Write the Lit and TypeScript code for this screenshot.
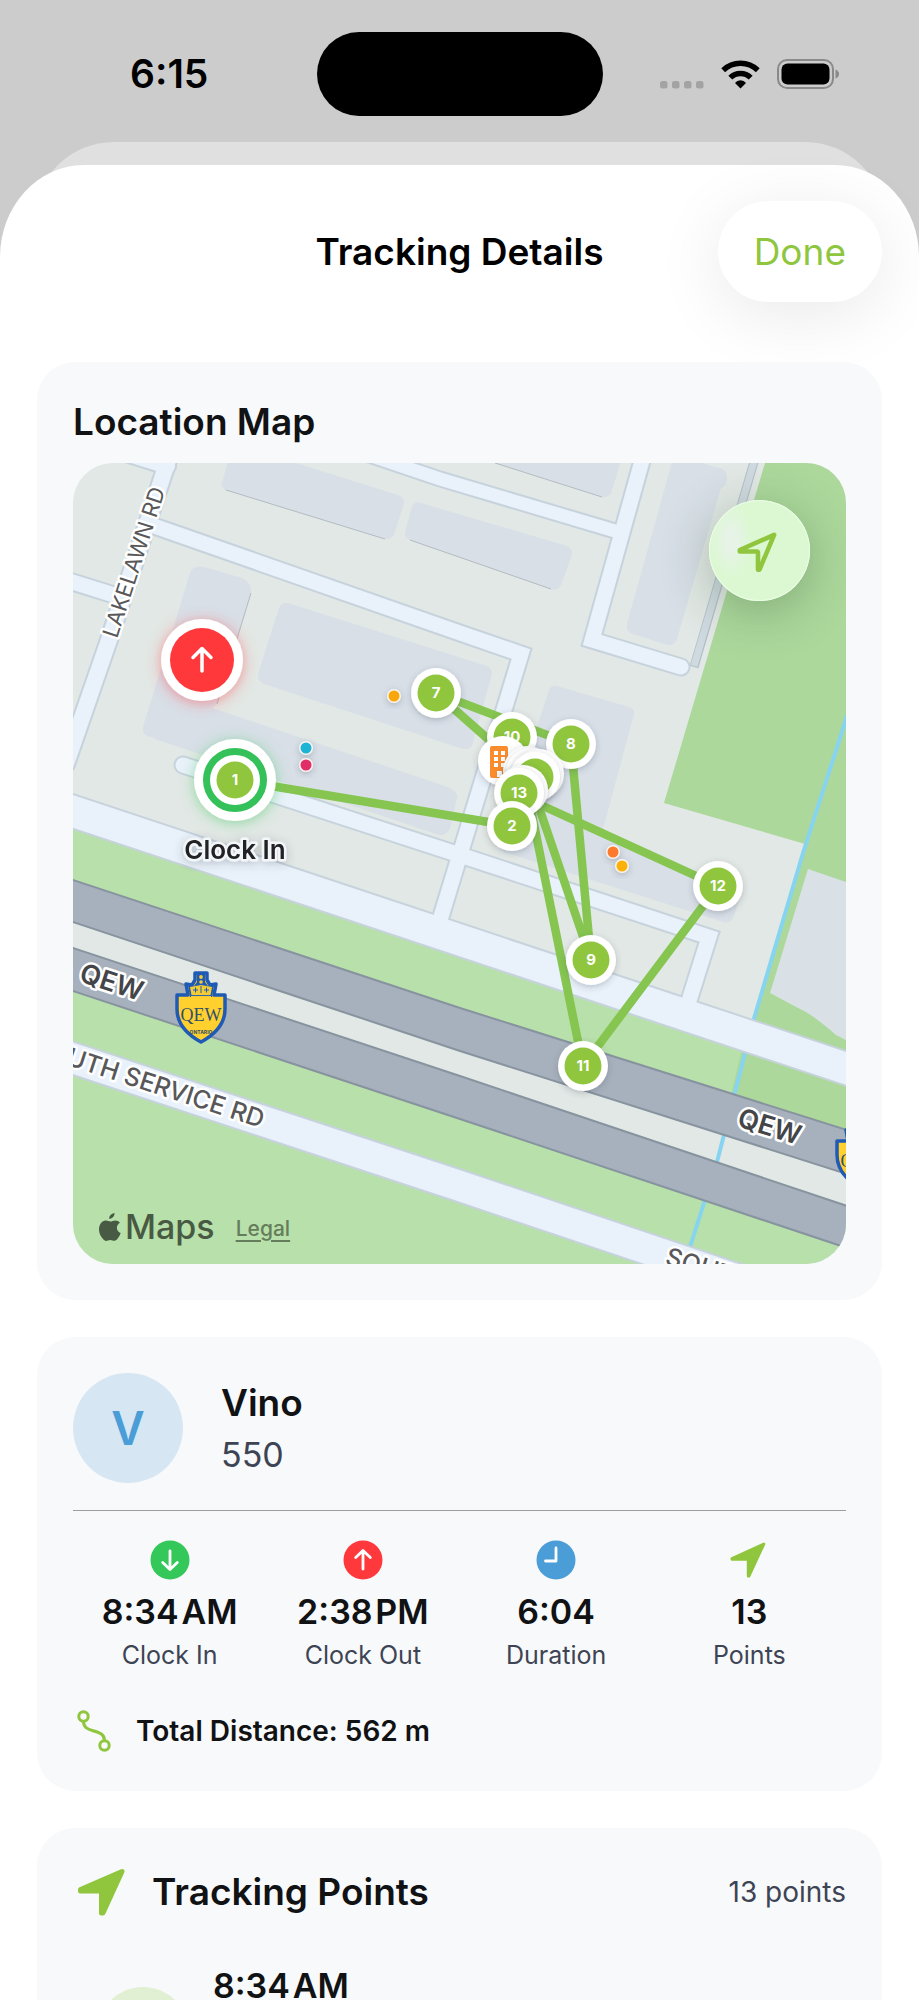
import { LitElement, html, svg, css } from "lit";
import { customElement } from "lit/decorators.js";

interface Pin {
  x: number;
  y: number;
  label: string;
}

interface Stat {
  icon: "in" | "out" | "clock" | "points";
  value: string;
  label: string;
}

/* Roads, drawn first as a wide casing and then as a narrower surface. */
const ROADS: { d: string; w: number }[] = [
  { d: "M60 432L167 466", w: 18 },
  { d: "M174 442L110 637L66 764", w: 18 },
  { d: "M50 575L114 595", w: 17 },
  { d: "M154 526L460 633L521 654L440 920", w: 17 },
  { d: "M183 765L463 856L709 937L688 1004", w: 17 },
  { d: "M360 452L440 479L615 531", w: 15 },
  { d: "M645 450L592 640L681 667", w: 17 },
  { d: "M60 807L860 1073", w: 33 },
];

const SERVICE_ROAD = "M60 1054L460 1186L760 1287";

const BUILDINGS = [
  "M230 455L222 483Q221 488 226 490L385 539Q391 540 394 535L404 503Q404 497 398 495L270 455Z",
  "M421 503Q415 501 412 506L405 532Q404 537 410 540L551 589Q558 591 561 585L572 555Q573 549 567 546Z",
  "M470 455L602 497Q608 498 611 493L623 455Z",
  "M674 455L627 624Q626 632 633 634L668 645Q675 645 677 639L721 488Q727 486 727 477Q727 471 722 469Z",
  "M196 567Q200 566 204 567L242 578Q252 583 251 593L217 704L212 708L445 786Q459 791 457 798L450 828Q447 836 439 835L155 739Q151 736 149 737Q142 734 143 727L190 573Q192 568 196 567Z",
  "M288 603Q282 602 279 608L258 674Q257 681 264 684L460 748Q469 751 472 745L492 674Q492 668 487 666Z",
  "M557 686Q551 685 549 690L499 843Q498 849 504 852L723 922Q730 924 733 918L742 892L603 829L634 714Q635 709 629 707Z",
];

const ROUTE: string[] = [
  "M235 780L512 826L526 790",
  "M532 778L436 693L571 744L591 960L529 778",
  "M526 785L583 1066L718 886L519 795",
];

const PINS: Pin[] = [
  { x: 436, y: 693, label: "7" },
  { x: 571, y: 744, label: "8" },
  { x: 591, y: 960, label: "9" },
  { x: 583, y: 1066, label: "11" },
  { x: 718, y: 886, label: "12" },
];

const POIS = [
  { x: 394, y: 696, c: "#f8a80a" },
  { x: 306, y: 748, c: "#1fb4d6" },
  { x: 306, y: 765, c: "#df2f66" },
  { x: 613, y: 852, c: "#fb7a2c" },
  { x: 622, y: 866, c: "#fbb00a" },
];

const STATS: Stat[] = [
  { icon: "in", value: "8:34\u200aAM", label: "Clock In" },
  { icon: "out", value: "2:38\u200aPM", label: "Clock Out" },
  { icon: "clock", value: "6:04", label: "Duration" },
  { icon: "points", value: "13", label: "Points" },
];

const pin = (p: Pin) => svg`
  <g filter="url(#soft)"><circle cx=${p.x} cy=${p.y} r="25" fill="#fff" /></g>
  <circle cx=${p.x} cy=${p.y} r="18.5" fill="#8fc63d" />
  <text class="pin-text" x=${p.x} y=${p.y + 5}>${p.label}</text>`;

const shield = (dx: number, dy: number) => svg`
  <g transform="translate(${dx} ${dy})">
    <path d="M195 973h12v7l3 5 6-1-2 11h11v14q0 20-24 33q-24-13-24-33v-14h11l-2-11 6 1 3-5z"
      fill="#ffd02e" stroke="#1f5bb5" stroke-width="3.5" stroke-linejoin="round" />
    <path d="M188 985l6 1 3-4v-8h8v8l3 4 6-1-2 12h-22z" fill="#1f5bb5" />
    <path d="M190 987l11-2 11 2-1.500 8h-19z" fill="#f3cb35" />
    <path d="M191 996.500h20" stroke="#f3cb35" stroke-width="1.200" />
    <circle cx="201" cy="977" r="1.900" fill="#f3cb35" /><circle cx="201" cy="982" r="1.800" fill="#f3cb35" />
    <path d="M193 990h5M195.500 987.500v5M204 990h5M206.500 987.500v5M201 986v7" stroke="#1f5bb5" />
    <text class="shield-text" x="201" y="1021">QEW</text>
    <text class="shield-small" x="201" y="1034">ONTARIO</text>
  </g>`;

@customElement("location-map")
export class LocationMap extends LitElement {
  static styles = css`
    :host { display: block; position: relative; overflow: hidden; border-radius: 40px; }
    .canvas { display: block; width: 100%; height: auto; }
    text { font-family: Inter, "Liberation Sans", sans-serif; }
    .pin-text { font-size: 15px; font-weight: 700; fill: #fff; text-anchor: middle; }
    .road { font-size: 22px; fill: #58585a; }
    .service { font-size: 25px; font-weight: 500; fill: #58585a; }
    .highway { font-size: 27px; font-weight: 600; fill: #434548; }
    .road, .service, .highway, .caption {
      stroke: #fff; stroke-width: 5px; stroke-linejoin: round; paint-order: stroke;
    }
    .caption { font-size: 26px; font-weight: 600; fill: #222426; text-anchor: middle; stroke: #f3f6f8; }
    .shield-text { font-family: "Liberation Serif", serif; font-size: 18px; fill: #31506b; text-anchor: middle; }
    .shield-small { font-size: 5px; font-weight: 700; fill: #31506b; text-anchor: middle; }
    .locate {
      position: absolute; top: 37px; right: 36px; width: 101px; height: 101px; padding: 0;
      border: 0; border-radius: 50%;
      background: radial-gradient(ellipse 20px 36px at 22% 40%, #e6f3e6 30%, #dcf8d3 100%);
      box-shadow: 0 10px 50px rgba(40, 70, 40, 0.32), inset 0 0 0 1px #eafce5;
    }
    .locate svg { display: block; width: 100%; height: 100%; }
    .credits {
      position: absolute; left: 25px; bottom: 15px; display: flex; align-items: center; gap: 21px;
      color: #485a44;
    }
    .brand { display: flex; align-items: center; gap: 3px; font: 500 34px/44px Inter, sans-serif; }
    .brand svg { width: 24px; height: 30px; }
    .legal { font: 500 21px/32px Inter, sans-serif; color: #647d5b; text-underline-offset: 4px; padding-top: 4px; }
  `;

  render() {
    return html`
      <svg class="canvas" viewBox="73 463 773 801" role="img" aria-label="Map of tracked locations">
        <defs>
          <filter id="soft" x="-40%" y="-40%" width="180%" height="180%">
            <feDropShadow dx="0" dy="2" stdDeviation="3" flood-color="#3b4450" flood-opacity="0.28" />
          </filter>
          <filter id="halo" x="-30%" y="-80%" width="160%" height="260%">
            <feDropShadow dx="0" dy="2" stdDeviation="5" flood-color="#3b4450" flood-opacity="0.28" />
          </filter>
          <filter id="glow-red" x="-50%" y="-50%" width="200%" height="200%">
            <feDropShadow dx="0" dy="2" stdDeviation="7" flood-color="#ff3b3f" flood-opacity="0.5" />
          </filter>
          <filter id="glow-green" x="-50%" y="-50%" width="200%" height="200%">
            <feDropShadow dx="0" dy="2" stdDeviation="7" flood-color="#34c759" flood-opacity="0.5" />
          </filter>
        </defs>
        <rect x="73" y="463" width="773" height="801" fill="#e2e8e5" />
        <path d="M765 463H846V1070L750 1030L805 844L664 803Z" fill="#acd89c" />
        <path d="M808 869L846 882V1040L836 1035Q812 1014 800 1009L770 993Z" fill="#d9e1e6" />
        <path d="M73 811L846 1069V1264H73Z" fill="#b8e0aa" />
        <path d="M744 1040L846 1069V1180L725 1120Z" fill="#acd89c" />
        <path d="M73 900L460 1030L846 1150V1226L460 1098L73 968Z" fill="#e2e8e5" />
        <path d="M848 713L803 853L753 1022L717 1162L690 1247" fill="none" stroke="#86d4f0" stroke-width="4" />

        ${BUILDINGS.map((d) => svg`<path d=${d} fill="#d8dfe7" />`)}
        <path d="M226 490L385 539M410 540L551 589M495 463L602 497M251 593L217 704" fill="none" stroke="#b3bbc2" stroke-width="1" />

        <path d="M756 455L694 667" fill="none" stroke="#b2bec6" stroke-width="9" />
        <path d="M756 455L694 666" fill="none" stroke="#cfdae0" stroke-width="7" />
        ${ROADS.map((r) => svg`<path d=${r.d} fill="none" stroke="#c6d2dc" stroke-width=${r.w + 2} stroke-linecap="round" />`)}
        <path d=${SERVICE_ROAD} fill="none" stroke="#c6d2dc" stroke-width="34" />
        ${ROADS.map((r) => svg`<path d=${r.d} fill="none" stroke="#e9f1fa" stroke-width=${r.w - 2} stroke-linecap="round" />`)}
        <path d=${SERVICE_ROAD} fill="none" stroke="#e9f1fa" stroke-width="30" />
        <g fill="#a7b1bd" stroke="#87939f" stroke-width="2">
          <path d="M70 879L460 1008L850 1131V1175L460 1051L70 921Z" />
          <path d="M70 947L460 1076L850 1207V1249L460 1119L70 990Z" />
        </g>

        <text class="road" transform="translate(117 639) rotate(-72)">LAKELAWN RD</text>
        <text class="highway" transform="translate(78 981) rotate(18)">QEW</text>
        <text class="highway" transform="translate(736 1126) rotate(17)">QEW</text>
        <text class="service" text-anchor="end" transform="translate(261 1128) rotate(18)">SOUTH SERVICE RD</text>
        <text class="service" transform="translate(664 1264) rotate(17)">SOUTH SERVICE RD</text>
        ${shield(0, 0)} ${shield(660, 146)}

        ${POIS.map((p) => svg`
          <g filter="url(#soft)"><circle cx=${p.x} cy=${p.y} r="7" fill="#fbf4ee" /></g>
          <circle cx=${p.x} cy=${p.y} r="5.500" fill=${p.c} />`)}

        ${ROUTE.map((d) => svg`<path d=${d} fill="none" stroke="#86c550" stroke-width="8.500" stroke-linejoin="round" />`)}

        <g filter="url(#glow-red)"><circle cx="202" cy="660" r="41" fill="#fff" /></g>
        <circle cx="202" cy="660" r="32" fill="#ff383c" />
        <path d="M202 671V649M193 657.500L202 648.500L211 657.500" fill="none" stroke="#fff" stroke-width="3.500" stroke-linecap="round" stroke-linejoin="round" />

        <g filter="url(#glow-green)"><circle cx="235" cy="780" r="41" fill="#fff" /></g>
        <circle cx="235" cy="780" r="28.500" fill="none" stroke="#34c159" stroke-width="7" />
        <circle cx="235" cy="780" r="18.500" fill="#8fc63d" />
        <text class="pin-text" x="235" y="785">1</text>
        <g filter="url(#halo)"><text class="caption" x="235" y="859">Clock In</text></g>

        ${PINS.map(pin)}
        ${pin({ x: 512, y: 737, label: "10" })}
        <g filter="url(#soft)"><circle cx="503" cy="761" r="25" fill="#fff" /></g>
        <rect x="490" y="746" width="18" height="32" rx="2" fill="#fa8c2e" />
        <path d="M494 751h4v4h-4zM501 751h4v4h-4zM494 757h4v4h-4zM501 757h4v4h-4zM494 763h4v4h-4zM501 763h4v4h-4zM497 771h5v6h-5z" fill="#fff" />
        ${pin({ x: 528, y: 771, label: "" })}
        ${pin({ x: 531, y: 773, label: "" })}
        <g filter="url(#soft)"><circle cx="539" cy="774" r="25" fill="#fff" /></g>
        ${pin({ x: 535, y: 777, label: "" })}
        <g filter="url(#soft)"><circle cx="523" cy="790" r="25" fill="#fff" /></g>
        ${pin({ x: 519, y: 793, label: "13" })}
        ${pin({ x: 512, y: 826, label: "2" })}
      </svg>

      <button class="locate" aria-label="Center on route">
        <svg viewBox="0 0 100 100" fill="none" stroke="#8fc63d" stroke-width="4.500" stroke-linejoin="round">
          <path d="M64.500 34.500L30.500 49.500V51H47.800L48.500 51.700V69H50Z" />
        </svg>
      </button>
      <div class="credits">
        <span class="brand">
          <svg viewBox="0 0 24 30" fill="currentColor" aria-label="Apple">
            <path d="M16.500 1c.2 3-2.300 5.900-5.300 5.800C10.900 4 13.600 1.300 16.500 1zM21.900 10.700c-1.900 1.200-3 2.900-3 5 0 2.500 1.500 4.500 3.800 5.400-.6 1.900-1.600 3.600-2.800 5.200-1 1.400-2 2.500-3.500 2.500-1.600 0-2.200-.9-4.200-.9-1.900 0-2.600.9-4.200 1-1.600 0-2.700-1.300-3.800-2.800C1.100 22.200 0 16.500 2.100 12.500c1.200-2.500 3.500-4 5.900-4 1.800 0 3 1 4.500 1 1.400 0 2.600-1.100 4.900-1.100 1.800 0 3.400.8 4.500 2.300z" />
          </svg>Maps</span>
        <a class="legal" href="#legal">Legal</a>
      </div>
    `;
  }
}

@customElement("app-root")
export class AppRoot extends LitElement {
  static styles = css`
    :host {
      display: flex; flex-direction: column; height: 100vh; overflow: hidden;
      background: #cccccc; color: #111214;
      font-family: Inter, "Liberation Sans", sans-serif;
    }
    h1, h2, p, dl, dd, dt, ol { margin: 0; padding: 0; font: inherit; }
    svg { display: block; flex: none; }

    .status {
      display: grid; grid-template-columns: 1fr 286px 1fr; align-items: center;
      padding: 32px 0 49px; color: #000;
    }
    .time { padding-left: 130px; font-size: 39px; line-height: 48px; font-weight: 600; }
    .island { height: 84px; border-radius: 42px; background: #000; }
    .signals { display: flex; justify-content: flex-end; align-items: center; gap: 17px; padding-right: 80px; }

    .sheet {
      position: relative; flex: 1; min-height: 0; display: flex; flex-direction: column; gap: 60px;
      padding: 36px 37px 0; border-radius: 84px 84px 0 0 / 92px 92px 0 0; background: #fff;
    }
    .behind {
      position: absolute; z-index: -1; top: -23px; left: 34px; right: 34px; height: 120px;
      border-radius: 80px 80px 0 0; background: #e0e0e0;
    }
    .layer { position: relative; z-index: 0; flex: 1; min-height: 0; display: flex; flex-direction: column; }

    .bar { display: grid; grid-template-columns: 1fr auto 1fr; align-items: center; }
    .title { grid-column: 2; color: #000; }
    .title, .heading, .name { font-size: 37px; line-height: 48px; font-weight: 600; }
    .done {
      justify-self: end; padding: 0 36px; height: 101px; border: 0; border-radius: 51px; background: #fff;
      color: #8fc63f; font: 400 37px/48px Inter, sans-serif;
      box-shadow: 0 12px 70px rgba(0, 0, 0, 0.09);
    }

    .cards {
      display: flex; flex-direction: column; gap: 37px; min-height: 0;
      overflow-y: auto; scrollbar-width: none;
    }
    .card { flex: none; padding: 36px; border-radius: 38px; background: #f8f9fb; }
    .map-card { display: flex; flex-direction: column; gap: 17px; }

    .person { display: flex; align-items: center; gap: 38px; padding-bottom: 27px; border-bottom: 1px solid #9b9ea3; }
    .avatar {
      display: grid; place-items: center; width: 110px; height: 110px; border-radius: 50%;
      background: #d6e6f3; color: #4a9dd6; font-size: 46px; line-height: 56px; font-weight: 600;
    }
    .who { display: flex; flex-direction: column; gap: 6px; }
    .number { font-size: 34px; line-height: 44px; color: #3d4454; }

    .stats { display: grid; grid-template-columns: repeat(4, 1fr); padding-top: 29px; }
    .stat { display: flex; flex-direction: column; align-items: center; }
    .value { font-size: 34px; line-height: 44px; font-weight: 600; padding: 10px 0 5px; white-space: nowrap; }
    .label { font-size: 25px; line-height: 32px; color: #3d4454; }
    .total { display: flex; align-items: center; gap: 21px; padding-top: 36px; font-size: 28px; line-height: 48px; font-weight: 600; }

    .points-head { display: flex; align-items: center; gap: 21px; height: 56px; }
    .count { margin-left: auto; font-size: 28px; line-height: 48px; color: #3d4454; }
    .points { display: flex; flex-direction: column; list-style: none; padding-top: 44px; }
    .point { display: flex; align-items: flex-start; gap: 24px; padding: 0 24px; }
    .badge { width: 92px; height: 92px; margin-top: 23px; border-radius: 50%; background: #e1efd2; }
    .when { font-size: 34px; line-height: 44px; font-weight: 600; }
  `;

  private arrow(size: number) {
    return html`<svg width=${size} height=${size} viewBox="0 0 40 40" fill="#8fc63d" stroke="#8fc63d" stroke-width="3" stroke-linejoin="round" aria-hidden="true">
      <path d="M34.800 4L3 18.700V19.300H19.300V36H19.900Z" />
    </svg>`;
  }

  private statIcon(kind: Stat["icon"]) {
    if (kind === "points") return this.arrow(40);
    const color = { in: "#34c759", out: "#ff383c", clock: "#4a9dd6" }[kind];
    const mark = {
      in: "M20 11V29M12.700 22.500L20 29.500L27.300 22.500",
      out: "M20 29V11M12.700 17.500L20 10.500L27.300 17.500",
      clock: "M20 8V21H9.500",
    }[kind];
    return html`<svg width="40" height="40" viewBox="0 0 40 40" fill="none" aria-hidden="true">
      <circle cx="20" cy="20" r="19.500" fill=${color} />
      <path d=${mark} stroke="#fff" stroke-width="2.800" stroke-linecap="round" stroke-linejoin="round" />
    </svg>`;
  }

  render() {
    return html`
      <div class="status">
        <span class="time">6:15</span>
        <span class="island"></span>
        <span class="signals">
          <svg width="44" height="30" viewBox="0 0 44 30" fill="#a3a3a3" aria-label="No signal">
            <rect y="22" width="7.500" height="7.500" rx="2.500" /><rect x="12" y="22" width="7.500" height="7.500" rx="2.500" />
            <rect x="24" y="22" width="7.500" height="7.500" rx="2.500" /><rect x="36" y="22" width="7.500" height="7.500" rx="2.500" />
          </svg>
          <svg width="39" height="30" viewBox="0 0 39 30" aria-label="Wi-Fi">
            <g fill="none" stroke="#000" stroke-width="5.500">
              <path d="M2.200 11.200A25 25 0 0 1 36.800 11.200" />
              <path d="M9.300 18.600A14.500 14.500 0 0 1 29.700 18.600" />
            </g>
            <path d="M19.500 29.500L14 24A7 7 0 0 1 25 24Z" />
          </svg>
          <svg width="62" height="30" viewBox="0 0 62 30" aria-label="Battery">
            <rect x="1" y="1" width="55" height="28" rx="9" fill="none" stroke="#8a8a8a" stroke-width="2" />
            <rect x="4.500" y="4.500" width="48" height="21" rx="6" />
            <path d="M58.500 10.500Q62 12 62 15T58.500 19.500Z" fill="#8a8a8a" />
          </svg>
        </span>
      </div>

      <div class="layer">
        <div class="behind"></div>
        <main class="sheet">
          <header class="bar">
            <h1 class="title">Tracking Details</h1>
            <button class="done">Done</button>
          </header>

          <div class="cards">
            <section class="card map-card">
              <h2 class="heading">Location Map</h2>
              <location-map></location-map>
            </section>

            <section class="card">
              <div class="person">
                <div class="avatar" aria-hidden="true">V</div>
                <div class="who">
                  <h2 class="name">Vino</h2>
                  <p class="number">550</p>
                </div>
              </div>
              <div class="stats">
                ${STATS.map((s) => html`
                  <div class="stat">
                    ${this.statIcon(s.icon)}
                    <span class="value">${s.value}</span>
                    <span class="label">${s.label}</span>
                  </div>`)}
              </div>
              <p class="total">
                <svg width="42" height="42" viewBox="0 0 42 42" fill="none" stroke="#8fc63d" stroke-width="3" stroke-linecap="round" aria-hidden="true">
                  <circle cx="10.500" cy="6.500" r="4.700" /><circle cx="31.500" cy="35.500" r="4.700" />
                  <path d="M10.500 11.500C10.500 17 14 19 20 20.700C27 22.600 31.500 24.500 31.500 30.500" />
                </svg>
                Total Distance: 562 m
              </p>
            </section>

            <section class="card">
              <div class="points-head">
                <svg width="58" height="56" viewBox="0 0 58 56" fill="#8fc63d" stroke="#8fc63d" stroke-width="5" stroke-linejoin="round" aria-hidden="true">
                  <path d="M49 7.500L7.500 25.500V27H28.500V49H30Z" />
                </svg>
                <h2 class="heading">Tracking Points</h2>
                <span class="count">13 points</span>
              </div>
              <ol class="points">
                <li class="point">
                  <span class="badge"></span>
                  <span class="when">8:34\u200aAM</span>
                </li>
              </ol>
            </section>
          </div>
        </main>
      </div>
    `;
  }
}
